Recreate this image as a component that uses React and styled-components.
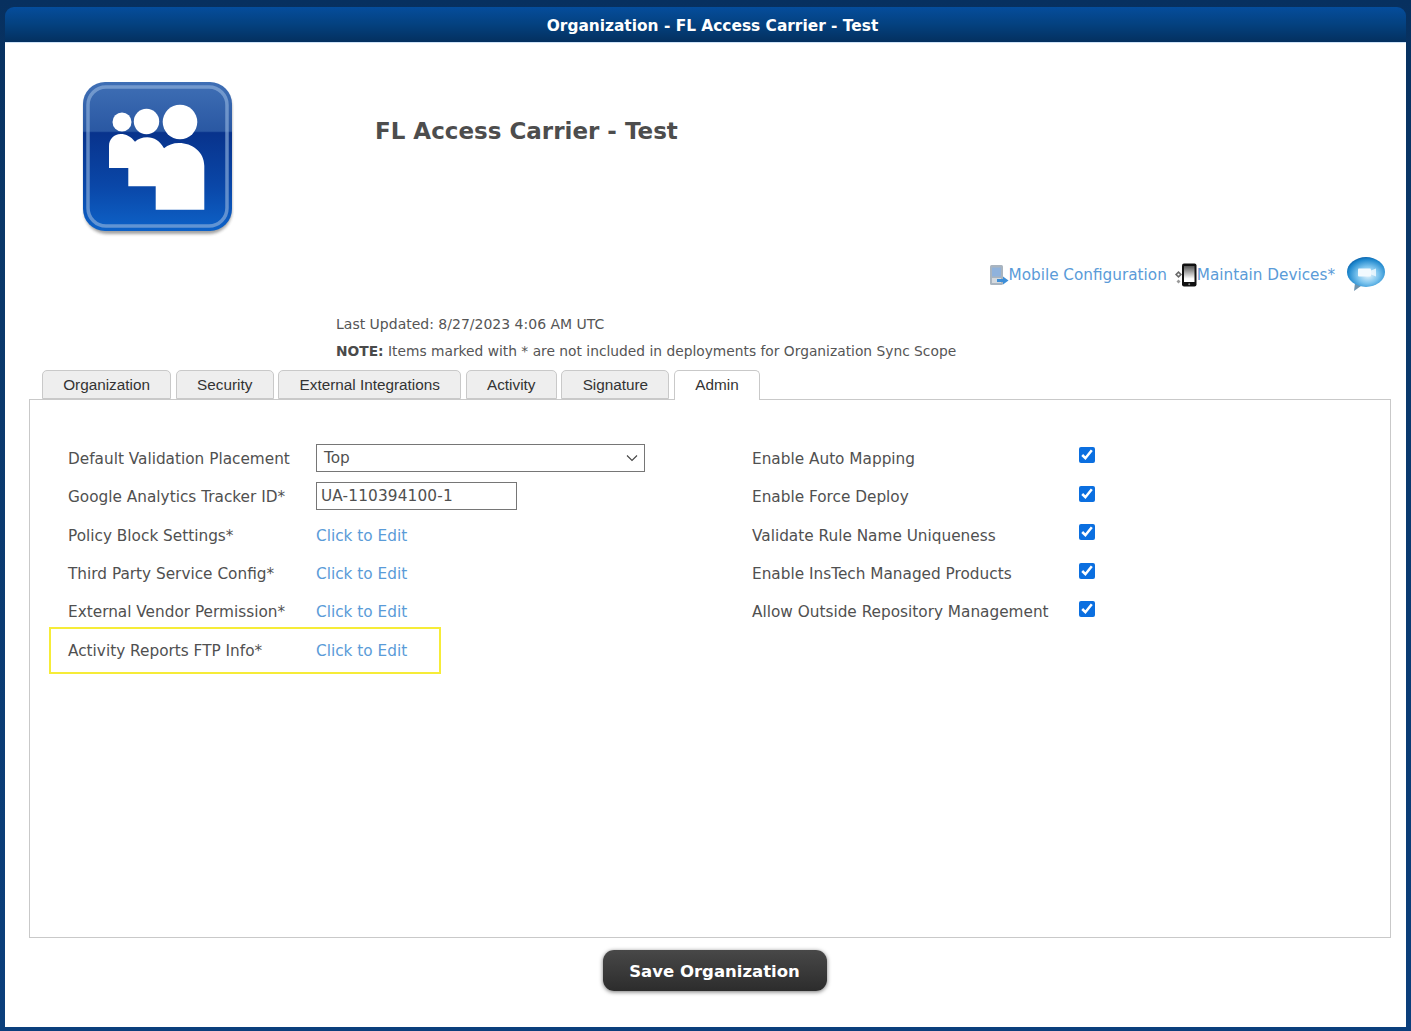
import React from 'react';
import styled, {createGlobalStyle} from 'styled-components';

const GlobalStyle = createGlobalStyle`
    html, body {
        margin: 0;
        padding: 0;
        background: #0b3c78;
    }
    * {
        box-sizing: border-box;
    }
`

const Page = styled.div`
    width: 1411px;
    height: 1031px;
    padding: 7px 5px 4px 5px;
    background: linear-gradient(180deg, #07305f 0%, #0a3768 20%, #0b3f7c 100%);
    font-family: "DejaVu Sans", Verdana, sans-serif;
    overflow: hidden;
`

const TitleBar = styled.div`
    height: 35px;
    padding-left: 14px;
    border-radius: 9px 9px 0 0;
    background: linear-gradient(180deg, #054d9c 0%, #04417f 50%, #04305f 100%);
    color: #ffffff;
    font-size: 15.4px;
    font-weight: 700;
    line-height: 38px;
    text-align: center;
`

const Body = styled.div`
    height: 985px;
    padding: 0 15px 0 24px;
    background: #ffffff;
    border-top: 1px solid #cfe3f7;
`

const Header = styled.div`
    display: flex;
    height: 212px;
    padding: 38px 0 0 53px;
`

const TitleText = styled.h1`
    margin: 0 0 0 141px;
    padding-top: 35px;
    color: #4d4d4d;
    font-size: 23px;
    line-height: 30px;
    font-weight: 700;
`

const LinkBar = styled.div`
    display: flex;
    justify-content: flex-end;
    align-items: center;
    height: 40px;
    padding-right: 5px;
`

const LinkItem = styled.a`
    display: flex;
    align-items: center;
    margin-right: ${props => props.gap}px;
    color: #5a9bd8;
    font-size: 15.25px;
    line-height: 20px;
`

const InfoBlock = styled.div`
    height: 75px;
    padding: 19px 0 0 307px;
    color: #555555;
`

const InfoLine = styled.p`
    margin: 0 0 7px 0;
    font-size: ${props => props.size}px;
    line-height: 20px;

    b {
        color: #4a4a4a;
    }
`

const Tabs = styled.div`
    display: flex;
    gap: 4.8px;
    padding-left: 13px;
    height: 30px;
    position: relative;
    z-index: 1;
    font-family: "Liberation Sans", Arial, sans-serif;
`

const Tab = styled.div`
    height: ${props => props.active ? 30 : 29}px;
    padding: 5px 20.2px 0 20.2px;
    border: 1px solid #c9c9c9;
    border-bottom: ${props => props.active ? 'none' : '1px solid #c9c9c9'};
    border-radius: 5px 5px 0 0;
    background: ${props => props.active ? '#ffffff' : '#eeeeee'};
    color: #333333;
    font-size: 15.3px;
    line-height: 18px;
`

const TabPanel = styled.div`
    height: 539px;
    margin-top: -1px;
    padding: 39.7px 0 0 38px;
    border: 1px solid #c9c9c9;
    display: flex;
`

const LeftColumn = styled.div`
    width: 684px;
`

const Row = styled.div`
    position: relative;
    display: flex;
    align-items: center;
    height: 38.4px;
    color: #505050;
    font-size: 15.3px;
`

const LeftLabel = styled.span`
    width: 248px;
    flex-shrink: 0;
`

const RightLabel = styled.span`
    width: 327px;
    flex-shrink: 0;
`

const EditLink = styled.a`
    color: #5a9bd8;
`

const SelectBox = styled.div`
    display: flex;
    align-items: center;
    justify-content: space-between;
    width: 329px;
    height: 28px;
    margin-top: -2px;
    padding: 0 6px 0 7px;
    border: 1px solid #767676;
    color: #505050;
`

const TextInput = styled.input`
    width: 201px;
    height: 28px;
    margin-top: -2px;
    padding: 0 4px;
    border: 1px solid #767676;
    border-radius: 0;
    background: #ffffff;
    color: #505050;
    font-family: inherit;
    font-size: 15.3px;
    letter-spacing: 0.15px;
`

const Check = styled.input`
    width: 16px;
    height: 16px;
    margin: -7px 0 0 0;
    accent-color: #0b6fe0;
`

const Highlight = styled.div`
    position: absolute;
    left: -19px;
    top: -4.7px;
    width: 392px;
    height: 47px;
    border: 2.5px solid #f6ec38;
`

const Footer = styled.div`
    display: flex;
    justify-content: center;
    padding: 11.5px 0 0 9px;
`

const SaveButton = styled.button`
    width: 224px;
    height: 41px;
    padding-top: 4px;
    border: none;
    border-radius: 11px;
    background: linear-gradient(180deg, #484848 0%, #2c2c2c 100%);
    box-shadow: 0 1px 4px rgba(0, 0, 0, 0.55);
    color: #ffffff;
    font-family: inherit;
    font-size: 16.5px;
    font-weight: 700;
`

const OrgLogo = () => (
    <svg width="152" height="156" viewBox="0 0 152 156">
        <defs>
            <linearGradient id="logoFill" x1="0" y1="0" x2="0" y2="1">
                <stop offset="0" stopColor="#3f6fb5"/>
                <stop offset="0.33" stopColor="#2a58a3"/>
                <stop offset="0.34" stopColor="#08338c"/>
                <stop offset="0.7" stopColor="#0a47a8"/>
                <stop offset="1" stopColor="#0d62c8"/>
            </linearGradient>
            <filter id="logoShadow" x="-10%" y="-10%" width="120%" height="120%">
                <feGaussianBlur stdDeviation="1.6"/>
            </filter>
        </defs>
        <rect x="2" y="4" width="148" height="149" rx="23" fill="#333" opacity="0.45" filter="url(#logoShadow)"/>
        <rect x="1" y="1" width="149" height="149" rx="22" fill="url(#logoFill)"/>
        <rect x="6" y="6" width="139" height="139" rx="18" fill="none" stroke="#8fb0dc" strokeWidth="3.5" opacity="0.65"/>
        <circle cx="40" cy="41" r="9.5" fill="#fff"/>
        <circle cx="64.5" cy="40.5" r="12.7" fill="#fff"/>
        <circle cx="98" cy="41" r="17.3" fill="#fff"/>
        <path d="M27 87H46.3V105.3H73.7V128.7H122.3V84.7C122.3 71 110 62 97 62C91 62 86 64 82 67.3C78 60 72 56.3 65.3 56.3C60 56.3 56 58 53 60.7C49 55.5 44 53 38.7 53C32 53 27 58 27 65Z" fill="#fff"/>
    </svg>
);

const MobileIcon = () => (
    <svg width="20" height="22" viewBox="0 0 20 22">
        <rect x="1" y="1" width="13" height="20" rx="1.5" fill="#a9b4bf"/>
        <rect x="3" y="3.5" width="9" height="9" fill="#8fb2dc"/>
        <rect x="3" y="14" width="9" height="5" fill="#d4d9de"/>
        <path d="M8 15H14V12.5L19.5 16.5L14 20.5V18H8Z" fill="#3d8ed8"/>
    </svg>
);

const DeviceIcon = () => (
    <svg width="22" height="24" viewBox="0 0 22 24">
        <defs>
            <linearGradient id="deviceScreen" x1="0" y1="0" x2="0" y2="1">
                <stop offset="0" stopColor="#555"/>
                <stop offset="0.8" stopColor="#fff"/>
            </linearGradient>
        </defs>
        <path d="M3.5 8L7 11.5L3.5 15L0 11.5Z" fill="#666"/>
        <circle cx="3.5" cy="11.5" r="1.1" fill="#fff"/>
        <path d="M3.5 16.5L5.5 18.5L3.5 20.5L1.5 18.5Z" fill="#999"/>
        <rect x="7" y="0.5" width="14.5" height="23" rx="2" fill="#111"/>
        <rect x="9" y="3" width="10.5" height="16" fill="url(#deviceScreen)"/>
        <circle cx="14.2" cy="21.2" r="1" fill="#888"/>
    </svg>
);

const ChatIcon = () => (
    <svg width="40" height="37" viewBox="0 0 40 37">
        <defs>
            <radialGradient id="chatFill" cx="0.55" cy="0.6" r="0.62">
                <stop offset="0" stopColor="#e6f5fc"/>
                <stop offset="0.45" stopColor="#7cc4ee"/>
                <stop offset="0.85" stopColor="#1c86cc"/>
                <stop offset="1" stopColor="#0a5fa8"/>
            </radialGradient>
        </defs>
        <path d="M9 26L15 29L8 34Q8.5 30 9 26Z" fill="#6f93ad"/>
        <ellipse cx="20" cy="15" rx="19" ry="15" fill="url(#chatFill)"/>
        <rect x="12" y="11.5" width="13" height="8" rx="1" fill="#f2fafe"/>
        <path d="M25 13.5L30 11.5V19.5L25 17.5Z" fill="#f2fafe" opacity="0.8"/>
    </svg>
);

const Chevron = () => (
    <svg width="12" height="8" viewBox="0 0 12 8">
        <path d="M1 1.5L6 6.5L11 1.5" fill="none" stroke="#444" strokeWidth="1.1"/>
    </svg>
);

const leftRows = [
    "Policy Block Settings*",
    "Third Party Service Config*",
    "External Vendor Permission*",
];

const rightRows = [
    "Enable Auto Mapping",
    "Enable Force Deploy",
    "Validate Rule Name Uniqueness",
    "Enable InsTech Managed Products",
    "Allow Outside Repository Management",
];

const tabNames = ["Organization", "Security", "External Integrations", "Activity", "Signature", "Admin"];

const App = () => {
    return (
        <Page>
            <GlobalStyle/>
            <TitleBar>Organization - FL Access Carrier - Test</TitleBar>
            <Body>
                <Header>
                    <OrgLogo/>
                    <TitleText>FL Access Carrier - Test</TitleText>
                </Header>
                <LinkBar>
                    <LinkItem gap={8}><MobileIcon/>Mobile Configuration</LinkItem>
                    <LinkItem gap={11}><DeviceIcon/>Maintain Devices*</LinkItem>
                    <ChatIcon/>
                </LinkBar>
                <InfoBlock>
                    <InfoLine size={14}>Last Updated: 8/27/2023 4:06 AM UTC</InfoLine>
                    <InfoLine size={13.8}><b>NOTE:</b> Items marked with * are not included in deployments for Organization Sync Scope</InfoLine>
                </InfoBlock>
                <Tabs>
                    {tabNames.map(name => (
                        <Tab key={name} active={name === "Admin"}>{name}</Tab>
                    ))}
                </Tabs>
                <TabPanel>
                    <LeftColumn>
                        <Row>
                            <LeftLabel>Default Validation Placement</LeftLabel>
                            <SelectBox>Top<Chevron/></SelectBox>
                        </Row>
                        <Row>
                            <LeftLabel>Google Analytics Tracker ID*</LeftLabel>
                            <TextInput defaultValue="UA-110394100-1"/>
                        </Row>
                        {leftRows.map(label => (
                            <Row key={label}>
                                <LeftLabel>{label}</LeftLabel>
                                <EditLink>Click to Edit</EditLink>
                            </Row>
                        ))}
                        <Row>
                            <Highlight/>
                            <LeftLabel>Activity Reports FTP Info*</LeftLabel>
                            <EditLink>Click to Edit</EditLink>
                        </Row>
                    </LeftColumn>
                    <div>
                        {rightRows.map(label => (
                            <Row key={label}>
                                <RightLabel>{label}</RightLabel>
                                <Check type="checkbox" defaultChecked/>
                            </Row>
                        ))}
                    </div>
                </TabPanel>
                <Footer>
                    <SaveButton>Save Organization</SaveButton>
                </Footer>
            </Body>
        </Page>
    );
};

export default App;
